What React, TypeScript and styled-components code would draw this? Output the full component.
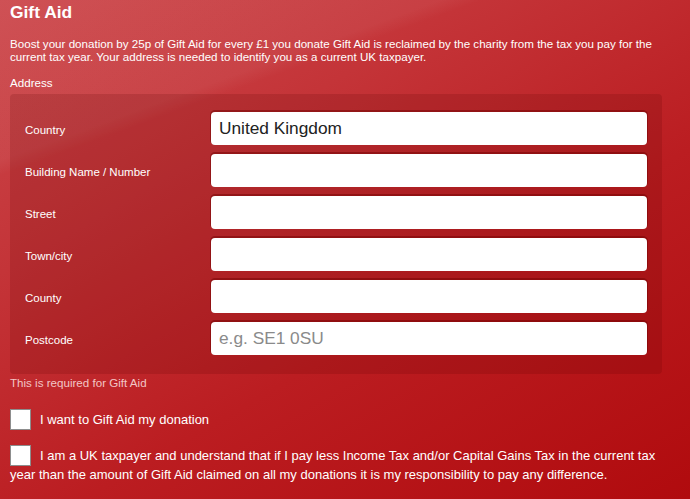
import React from "react";
import styled, { createGlobalStyle } from "styled-components";

const Global = createGlobalStyle`
  html, body { margin: 0; padding: 0; }
  body {
    font-family: "Liberation Sans", Arial, sans-serif;
    background: #b8161a;
  }
  * { box-sizing: border-box; }
`;

const Page = styled.div`
  min-height: 100vh;
  padding: 0 28px 0 10px;
  color: #fff;
  background:
    linear-gradient(160deg, rgba(255,255,255,0.05) 0%, rgba(255,255,255,0.05) 21%, rgba(255,255,255,0) 23%),
    linear-gradient(150deg, #cc484c 0%, #c43438 30%, #bb1d21 60%, #b00a0d 100%);
  overflow: hidden;
`;

const Title = styled.h2`
  margin: 0;
  padding-top: 2px;
  font-size: 17.4px;
  line-height: 21px;
  font-weight: bold;
`;

const Intro = styled.p`
  margin: 14px 0 0;
  font-size: 11.6px;
  line-height: 13px;
`;

const SectionLabel = styled.div`
  margin-top: 13px;
  font-size: 11.6px;
  line-height: 14px;
`;

const Panel = styled.div`
  margin-top: 4px;
  width: 652px;
  padding: 18px 15px 19px 15px;
  background: rgba(90, 0, 0, 0.16);
  border-radius: 4px;
  display: flex;
  flex-direction: column;
  gap: 9px;
`;

const Row = styled.div`
  display: grid;
  grid-template-columns: 186px 1fr;
  align-items: center;
`;

const FieldLabel = styled.label`
  font-size: 11.5px;
  color: #fff;
  padding-top: 2px;
`;

const Input = styled.input`
  height: 33px;
  width: 100%;
  border: none;
  border-radius: 4px;
  background: #fff;
  box-shadow: 0 -1px 0 1px rgba(110, 0, 0, 0.45);
  padding: 0 8px;
  font-family: "Liberation Sans", Arial, sans-serif;
  font-size: 17.3px;
  color: #222;
  outline: none;
  &::placeholder { color: #8a8a8a; }
`;

const Hint = styled.div`
  margin-top: 2px;
  font-size: 11.6px;
  line-height: 14px;
  color: #f2c6c6;
`;

const CheckLine = styled.label<{ $top: number }>`
  display: block;
  margin-top: ${(p) => p.$top}px;
  font-size: 13px;
  line-height: 19px;
  width: 652px;
`;

const Box = styled.span`
  display: inline-block;
  width: 21px;
  height: 21px;
  margin: -1px 9px -1px 0;
  background: #fff;
  border: 1px solid #8d8d8d;
  vertical-align: top;
`;

const Trailing = styled.div`
  margin-top: 10px;
  font-size: 13px;
  line-height: 19px;
`;

const fields: { label: string; value?: string; placeholder?: string }[] = [
  { label: "Country", value: "United Kingdom" },
  { label: "Building Name / Number" },
  { label: "Street" },
  { label: "Town/city" },
  { label: "County" },
  { label: "Postcode", placeholder: "e.g. SE1 0SU" },
];

export default function App() {
  return (
    <>
      <Global />
      <Page>
        <Title>Gift Aid</Title>
        <Intro>
          Boost your donation by 25p of Gift Aid for every £1 you donate Gift Aid is reclaimed by the charity from the tax you pay for the current tax year. Your address is needed to identify you as a current UK taxpayer.
        </Intro>
        <SectionLabel>Address</SectionLabel>
        <Panel>
          {fields.map((f) => (
            <Row key={f.label}>
              <FieldLabel>{f.label}</FieldLabel>
              <Input defaultValue={f.value} placeholder={f.placeholder} />
            </Row>
          ))}
        </Panel>
        <Hint>This is required for Gift Aid</Hint>
        <CheckLine $top={20}>
          <Box />
          I want to Gift Aid my donation
        </CheckLine>
        <CheckLine $top={17}>
          <Box />
          I am a UK taxpayer and understand that if I pay less Income Tax and/or Capital Gains Tax in the current tax year than the amount of Gift Aid claimed on all my donations it is my responsibility to pay any difference.
        </CheckLine>
        <Trailing>Would you like to hear more from the charity?</Trailing>
      </Page>
    </>
  );
}
